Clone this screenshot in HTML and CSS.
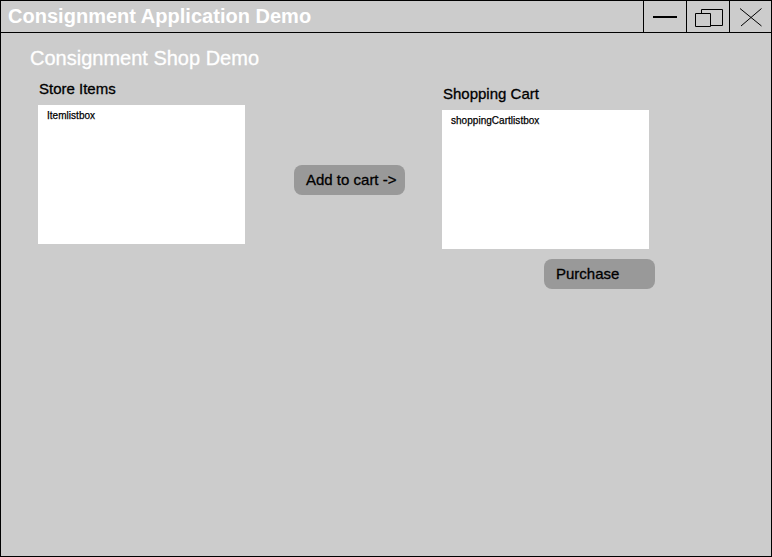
FILE: index.html
```html
<!DOCTYPE html>
<html lang="en">
<head>
<meta charset="utf-8">
<title>Consignment Application Demo</title>
<link rel="stylesheet" href="styles.css">
</head>
<body>
<div class="window">
  <header class="titlebar">
    <h1 class="title">Consignment Application Demo</h1>
    <div class="controls">
      <button class="control" aria-label="Minimize"><svg width="42" height="32" viewBox="0 0 42 32"><path d="M9 16H33" stroke-width="2"/></svg></button>
      <button class="control" aria-label="Restore"><svg width="42" height="32" viewBox="0 0 42 32"><path d="M14.5 8.500H35.500V24.500H14.500Z"/><path class="front" d="M8.500 12.500H23.500V25.500H8.500Z"/></svg></button>
      <button class="control" aria-label="Close"><svg width="41" height="32" viewBox="0 0 41 32"><path d="M10 7.500L31.500 25M31.500 7.500L11 25"/></svg></button>
    </div>
  </header>
  <main class="content">
    <h2 class="heading">Consignment Shop Demo</h2>
    <div class="shop">
      <section class="store">
        <h3 class="label">Store Items</h3>
        <div class="listbox">Itemlistbox</div>
      </section>
      <button class="button add">Add to cart -&gt;</button>
      <section class="cart">
        <h3 class="label">Shopping Cart</h3>
        <div class="listbox">shoppingCartlistbox</div>
        <button class="button purchase">Purchase</button>
      </section>
    </div>
  </main>
</div>
</body>
</html>
```
FILE: styles.css
```css
* { box-sizing: border-box; }
body { margin: 0; font-family: "Liberation Sans", Arial, sans-serif; color: #000; }
h1, h2, h3 { margin: 0; font-weight: normal; }
.window { width: 772px; height: 557px; border: 1px solid #000; background: #ccc; }
.titlebar { display: flex; justify-content: space-between; height: 32px; border-bottom: 1px solid #000; }
.title { padding: 4px 0 0 7px; font-size: 20px; line-height: 23px; font-weight: bold; letter-spacing: 0.02px; color: #fff; }
.controls { display: flex; }
.control { display: flex; padding: 0; border: 0; border-left: 1px solid #000; background: transparent; }
.control svg { display: block; fill: none; stroke: #000; stroke-width: 1; }
.control .front { fill: #ccc; }
.heading { padding: 14px 0 0 29px; font-size: 20px; line-height: 23px; color: #fff; -webkit-text-stroke: 0.3px; }
.shop { display: flex; align-items: flex-start; padding-left: 37px; }
.store { padding-top: 10px; }
.cart { display: flex; flex-direction: column; margin-left: 37px; padding-top: 15px; }
.label { padding-left: 1px; font-size: 15px; line-height: 17px; height: 25px; -webkit-text-stroke: 0.3px; }
.listbox { width: 207px; height: 139px; padding: 5px 9px; background: #fff; font-size: 10px; line-height: 11px; letter-spacing: 0.03px; -webkit-text-stroke: 0.25px; }
.button { width: 111px; height: 30px; padding: 0 12px; border: 0; border-radius: 8px; background: #999; font: 15px/30px "Liberation Sans", Arial, sans-serif; color: #000; text-align: left; white-space: nowrap; -webkit-text-stroke: 0.3px; }
.add { margin: 95px 0 0 49px; }
.purchase { margin: 10px 0 0 102px; }
```
